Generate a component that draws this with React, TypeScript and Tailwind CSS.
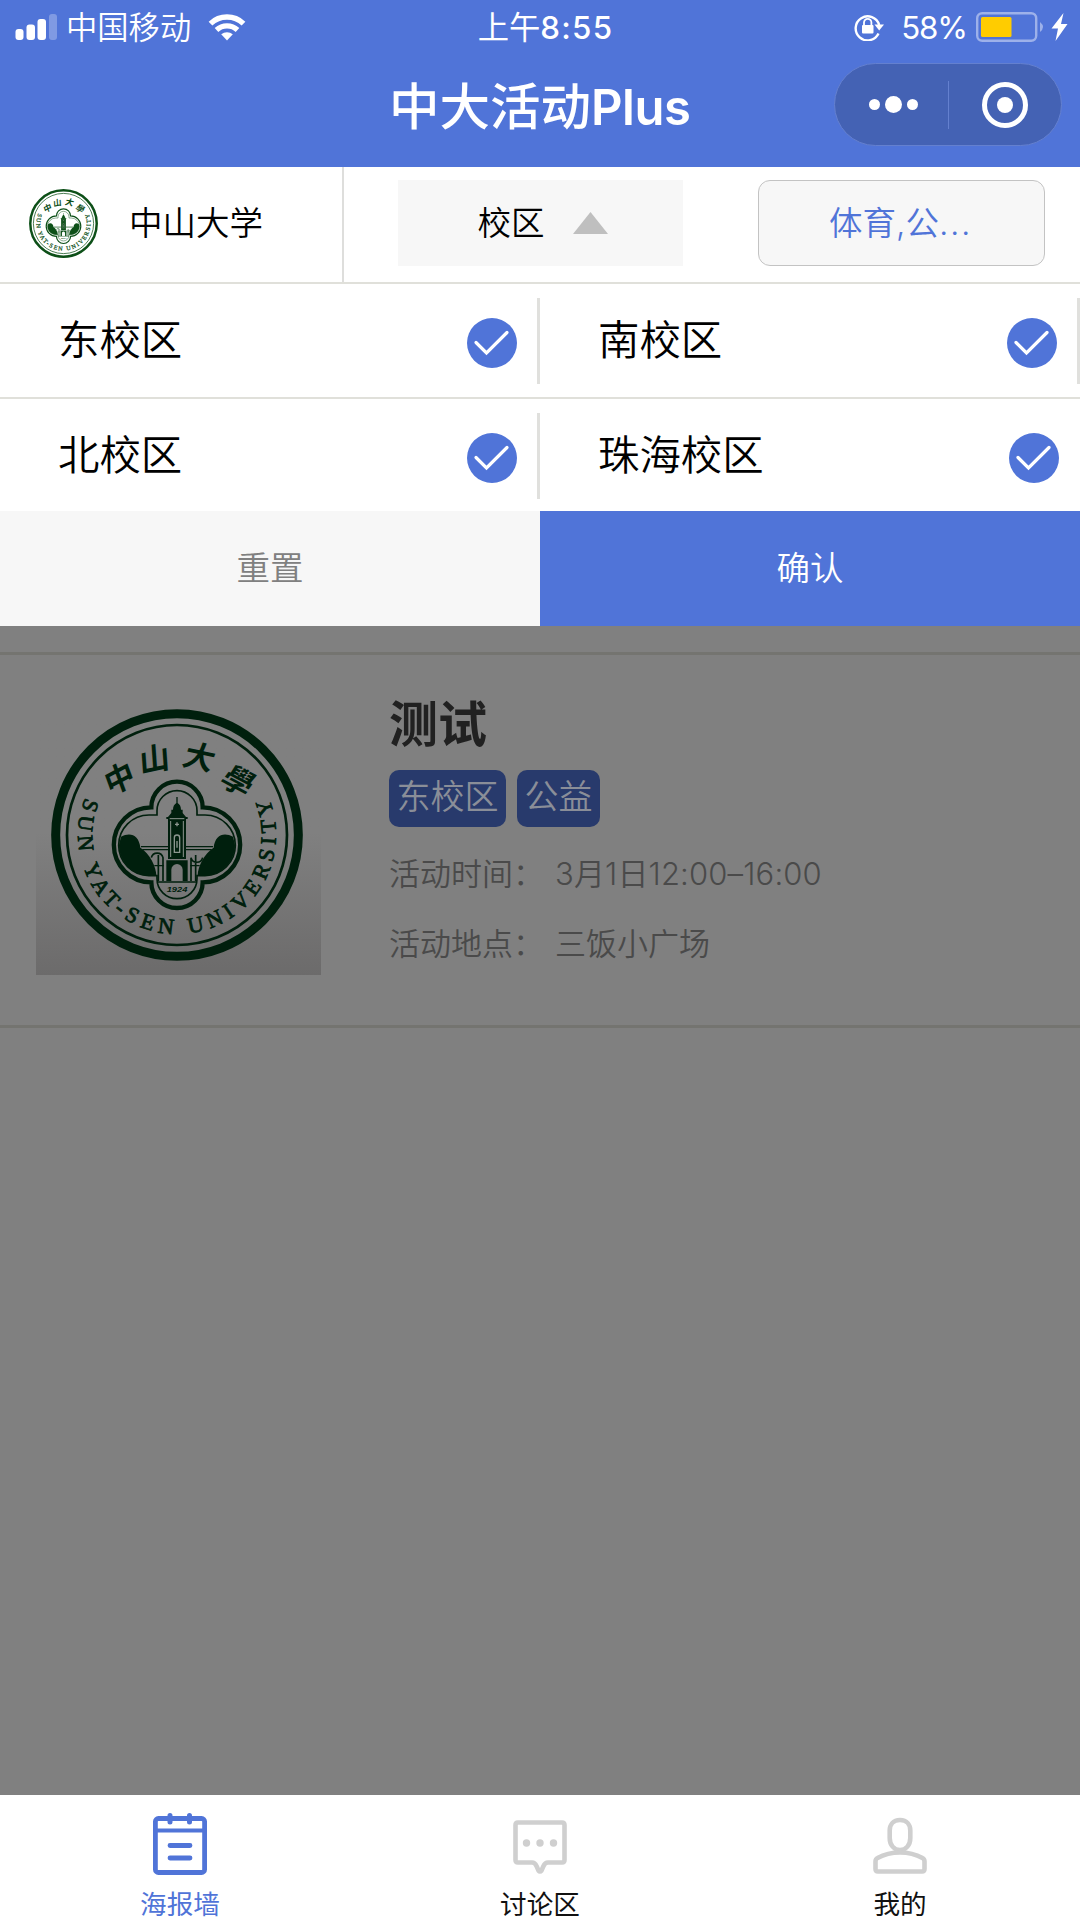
import React from "react";

const quatrefoilOuter =
  "M-77 -83 A77 77 0 0 1 77 -83 A112.500 112.500 0 0 1 77 142 A77 77 0 0 1 -77 142 A112.500 112.500 0 0 1 -77 -83 Z";
const quatrefoilInner =
  "M-60 -60 V-73 A60 60 0 0 1 60 -73 V-60 H84 A91 91 0 0 1 84 122 H60 V131 A60 60 0 0 1 -60 131 V122 H-84 A91 91 0 0 1 -84 -60 Z";

const topCharacters = [
  { char: "中", x: -173, y: -170, angle: -28 },
  { char: "山", x: -68, y: -228, angle: -12 },
  { char: "大", x: 68, y: -234, angle: 12 },
  { char: "學", x: 184, y: -162, angle: 28 },
];

function Emblem({ id, color, paper, className }: { id: string; color: string; paper: string; className: string }) {
  return (
    <svg viewBox="-378 -378 756 756" className={className}>
      <circle r="364" fill={paper} stroke={color} strokeWidth="27" />
      <circle r="330" fill="none" stroke={color} strokeWidth="8" />
      {topCharacters.map((c) => (
        <text
          key={c.char}
          transform={`translate(${c.x} ${c.y}) rotate(${c.angle}) skewX(-8)`}
          textAnchor="middle"
          y="34"
          fontSize="92"
          fontWeight="700"
          fill={color}
          fontFamily="Noto Sans CJK SC, sans-serif"
        >
          {c.char}
        </text>
      ))}
      <path id={id} d="M-275 -112 A297 297 0 1 0 275 -112" fill="none" />
      <text fontSize="66" fill={color} stroke={color} strokeWidth="2.500" fontFamily="Liberation Serif, serif">
        <textPath href={`#${id}`} textLength="1160" lengthAdjust="spacing">
          SUN YAT-SEN UNIVERSITY
        </textPath>
      </text>
      <path d={quatrefoilOuter} fill={paper} stroke={color} strokeWidth="13" />
      <path d={quatrefoilInner} fill="none" stroke={color} strokeWidth="5" />
      <path d="M-168 5 C-140 -10 -114 0 -110 38 C-82 55 -62 95 -62 122 H-84 C-130 122 -174 84 -174 30 Z" fill={color} />
      <path d="M168 5 C140 -10 114 0 110 38 C82 55 62 95 62 122 H84 C130 122 174 84 174 30 Z" fill={color} />
      <path d="M-108 35 H108 M-104 44 H104 M-68 92 H-40 M40 92 H68" stroke={color} strokeWidth="4" />
      <path
        d="M-77 68 A18 18 0 0 1 -42 68 V138 M-56 60 V138 M77 68 A18 18 0 0 1 42 68 V138 M56 60 V138 M-60 141 H60"
        fill="none"
        stroke={color}
        strokeWidth="5"
      />
      <path d="M-2 -114 H2 V-96 C8 -92 12 -86 12 -76 H17 V-66 L27 -54 H32 V-48 H27 V72 H-27 V-48 H-32 V-54 L-27 -54 L-17 -66 V-76 H-12 C-12 -86 -8 -92 -2 -96 Z" fill={color} />
      <path d="M-32 76 H32 V138 H17 V104 A17 17 0 0 0 -17 104 V138 H-32 Z" fill={color} />
      <path d="M-22 -49 H22 M-19 -42 V66 M19 -42 V66" stroke="#8c968f" strokeWidth="3" />
      <path d="M-8 52 V8 A8 8 0 0 1 8 8 V52 Z" fill="none" stroke="#8c968f" strokeWidth="4" />
      <path d="M-6 -32 H6 M0 -38 V-26 M0 18 V38" stroke="#8c968f" strokeWidth="4" />
      <text
        y="172"
        textAnchor="middle"
        fontSize="24"
        fontWeight="700"
        fontStyle="italic"
        fill={color}
        fontFamily="Liberation Sans, sans-serif"
        textLength="62"
        lengthAdjust="spacingAndGlyphs"
      >
        1924
      </text>
    </svg>
  );
}

function StatusBar() {
  return (
    <div className="flex h-[54px] items-center justify-between pl-[15px] pr-[12px] text-[31.300px] leading-[54px]">
      <div className="flex w-[360px] items-center">
        <svg viewBox="0 0 42 26" className="h-[26px] w-[42px]" fill="#fff">
          <rect x="0.5" y="15" width="8" height="11" rx="3" />
          <rect x="11.5" y="10.500" width="8.500" height="15.500" rx="3" />
          <rect x="22.500" y="5" width="8.500" height="21" rx="3" />
          <rect x="34" y="0" width="8" height="26" rx="3" opacity="0.28" />
        </svg>
        <span className="ml-[9px] h-[54px] pt-[1px] font-[350]">中国移动</span>
        <svg viewBox="0 0 38 27" className="ml-[17px] h-[27px] w-[38px]">
          <g fill="none" stroke="#fff" strokeWidth="5.400">
            <path d="M2.500 9.600 A24 24 0 0 1 35.500 9.600" />
            <path d="M8.500 16 A15.500 15.500 0 0 1 29.500 16" />
          </g>
          <path d="M13.200 20.200 A9.500 9.500 0 0 1 24.800 20.200 L19 26.500 Z" fill="#fff" />
        </svg>
      </div>
      <div className="h-[54px] pt-[1px] pl-[8px] text-center font-medium tracking-[1.300px]">
        <span className="font-normal tracking-normal">上午</span>8:55
      </div>
      <div className="flex w-[360px] items-center justify-end">
        <svg viewBox="0 0 30 28" className="h-[28px] w-[30px]">
          <path d="M24.500 20.500 A12 12 0 1 1 25.200 12" fill="none" stroke="#fff" strokeWidth="2.400" />
          <path d="M20.500 11.500 H30 L25.200 17.500 Z" fill="#fff" />
          <rect x="8" y="12" width="11.500" height="8.500" rx="1" fill="#fff" />
          <path d="M10 12.500 V9.500 A3.700 3.700 0 0 1 17.400 9.500 V12.500" fill="none" stroke="#fff" strokeWidth="1.800" />
        </svg>
        <span className="ml-[17px] h-[54px] pt-[1px] tracking-[-1.100px]">58%</span>
        <svg viewBox="0 0 68 30" className="ml-[9px] h-[30px] w-[68px]">
          <rect x="1.200" y="1.200" width="59" height="27.600" rx="5" fill="none" stroke="#9db1ea" strokeWidth="2.400" />
          <rect x="5" y="5" width="30.500" height="20" rx="1.500" fill="#ffcc00" />
          <path d="M64 10 Q70 15 64 20 Z" fill="#9db1ea" />
        </svg>
        <svg viewBox="0 0 17 28" className="ml-[7px] h-[28px] w-[17px]">
          <path d="M12.500 0 L0.500 15.500 H7 L4.500 28 L16.500 11 H10 Z" fill="#fff" />
        </svg>
      </div>
    </div>
  );
}

function TitleBar() {
  return (
    <div className="flex h-[113px] items-start pr-[18px]">
      <div className="w-[389px]" />
      <h1 className="h-[100px] w-[445px] whitespace-nowrap text-[50.500px] leading-[106px] font-medium">
        中大活动<span className="text-[49px] font-semibold tracking-[-0.500px]">Plus</span>
      </h1>
      <div className="mt-[9px] flex h-[83px] w-[228px] items-center rounded-full border border-[#6480cf] bg-[#4462b4]">
        <div className="flex w-[113px] items-center gap-[5px] pl-[34px]">
          <span className="size-[11px] rounded-full bg-white" />
          <span className="size-[17px] rounded-full bg-white" />
          <span className="size-[11px] rounded-full bg-white" />
        </div>
        <div className="h-[48px] w-px bg-[#6480cf]" />
        <div className="flex flex-1 items-center justify-center">
          <div className="flex size-[46px] items-center justify-center rounded-full border-[5.5px] border-white">
            <span className="size-[16px] rounded-full bg-white" />
          </div>
        </div>
      </div>
    </div>
  );
}

function FilterBar() {
  return (
    <div className="flex h-[117px] border-b-[2px] border-[#e0e0da] bg-white text-[33.5px] font-[350]">
      <div className="flex h-[115px] w-[344px] items-center border-r-2 border-[#dededc] pb-[2px] pl-[29px]">
        <Emblem id="small-seal-text" color="#0d5018" paper="#ffffff" className="size-[69px]" />
        <span className="ml-[31px] text-black">中山大学</span>
      </div>
      <div className="mt-[13px] ml-[54px] flex h-[86px] w-[285px] items-center justify-center bg-[#f7f7f7] pl-[4px]">
        <span className="pt-[1px]">校区</span>
        <svg viewBox="0 0 35 22" className="ml-[28px] h-[22px] w-[35px]">
          <path d="M17.500 0 L35 22 H0 Z" fill="#bfbfbf" />
        </svg>
      </div>
      <div className="mt-[13px] ml-[75px] flex h-[86px] w-[287px] items-center justify-center rounded-[12px] border border-[#c3c3c3] bg-[#f7f7f7] pt-[1px] pr-[2px] text-[#5074d8]">
        体育,公<span className="tracking-[1.6px]">...</span>
      </div>
    </div>
  );
}

function CheckBadge() {
  return (
    <svg viewBox="0 0 50 50" className="mt-[4px] size-[50px]">
      <circle cx="25" cy="25" r="25" fill="#5074d8" />
      <path d="M9 24.500 L19.500 35 L40 14.500" fill="none" stroke="#fff" strokeWidth="3.200" strokeLinecap="round" />
    </svg>
  );
}

function CampusCell({ name, divider }: { name: string; divider: boolean }) {
  return (
    <div className="flex h-[113px] w-[540px] items-center justify-between pl-[58px]">
      <span className="text-[41.400px] font-[350]">{name}</span>
      <div className={divider ? "flex items-center gap-[20px]" : "flex items-center pr-[21px]"}>
        <CheckBadge />
        {divider && <div className="h-[86px] w-[3px] bg-[#e0e0dd]" />}
      </div>
    </div>
  );
}

function CampusPanel() {
  return (
    <div className="bg-white">
      <div className="flex h-[115px] border-b-[2px] border-[#e0e0da]">
        <CampusCell name="东校区" divider />
        <CampusCell name="南校区" divider />
      </div>
      <div className="flex h-[112px]">
        <CampusCell name="北校区" divider />
        <CampusCell name="珠海校区" divider={false} />
      </div>
      <div className="flex h-[115px] text-[33.500px] leading-[113px]">
        <button className="w-[540px] bg-[#f7f7f7] font-[350] text-[#808080]">重置</button>
        <button className="w-[540px] bg-[#5074d8] font-[350] text-white">确认</button>
      </div>
    </div>
  );
}

function EventCard() {
  return (
    <div className="mt-[26px] flex h-[376px] border-y-[3px] border-[#747470] bg-[#808080]">
      <div className="mt-[35px] ml-[36px] flex h-[285px] w-[285px] justify-center bg-linear-to-b from-[#808080] from-50% to-[#6c6b6b] pt-[19px] pr-[3px]">
        <Emblem id="large-seal-text" color="#001f0d" paper="transparent" className="size-[252px]" />
      </div>
      <div className="ml-[68px]">
        <h2 className="mt-[38px] h-[64px] text-[49px] leading-[64px] font-bold text-[#212121]">测试</h2>
        <div className="mt-[13px] flex gap-[11px] text-[34px] leading-[54px] text-[#8a8e98]">
          <span className="h-[57px] w-[117px] rounded-[10px] bg-[#283a6c] text-center font-[350]">东校区</span>
          <span className="h-[57px] w-[83px] rounded-[10px] bg-[#283a6c] text-center font-[350]">公益</span>
        </div>
        <div className="mt-[22px] flex h-[50px] text-[31px] leading-[50px] font-[350] text-[#4a4a4a]">
          <span className="w-[166px]">活动时间：</span>
          <span className="tracking-[0.150px]">3月1日12:00–16:00</span>
        </div>
        <div className="mt-[20px] flex h-[50px] text-[31px] leading-[50px] font-[350] text-[#4a4a4a]">
          <span className="w-[166px]">活动地点：</span>
          <span>三饭小广场</span>
        </div>
      </div>
    </div>
  );
}

function TabBar() {
  return (
    <nav className="flex h-[125px] bg-white pt-[17px] text-[26.600px] font-normal text-[#111111]">
      <div className="flex w-[360px] flex-col items-center text-[#5074d8]">
        <svg viewBox="0 0 54 64" className="h-[64px] w-[54px]" fill="none" stroke="#5074d8" strokeWidth="4.800" strokeLinecap="round">
          <rect x="2.400" y="6.500" width="49.200" height="54" rx="3" />
          <path d="M2.300 18.500 H51.700" strokeWidth="4" />
          <path d="M17 3.500 V10 M36.500 3.500 V10" strokeWidth="5" />
          <path d="M17 33.500 H37 M17 46 H37" />
        </svg>
        <span className="mt-[12px] leading-[32px]">海报墙</span>
      </div>
      <div className="flex w-[360px] flex-col items-center">
        <svg viewBox="0 0 54 64" className="h-[64px] w-[54px]" fill="none" stroke="#cfcfcf" strokeWidth="4.600" strokeLinejoin="round">
          <path d="M5 10.500 H49 Q51.500 10.500 51.500 13 V48 Q51.500 50.500 49 50.500 H35 Q32 50.500 30.500 54 L28.500 58.500 Q27 60.500 25.500 58.500 L23.500 54 Q22 50.500 19 50.500 H5 Q2.500 50.500 2.500 48 V13 Q2.500 10.500 5 10.500 Z" />
          <g fill="#cfcfcf" stroke="none">
            <circle cx="13.500" cy="31" r="3.700" />
            <circle cx="27" cy="31" r="3.700" />
            <circle cx="40.500" cy="31" r="3.700" />
          </g>
        </svg>
        <span className="mt-[12px] leading-[32px]">讨论区</span>
      </div>
      <div className="flex w-[360px] flex-col items-center">
        <svg viewBox="0 0 54 64" className="h-[64px] w-[54px]" fill="none" stroke="#cfcfcf" strokeWidth="4.600" strokeLinejoin="round">
          <path d="M27 8 C34 8 37.300 13 37.300 18.500 V26 C37.300 33 33 38 27 38 C21 38 16.700 33 16.700 26 V18.500 C16.700 13 20 8 27 8 Z" />
          <path d="M27 40.500 C36 40.500 44 43 49.500 46 Q51.500 47 51.500 49.500 V57 Q51.500 59.500 49 59.500 H5 Q2.500 59.500 2.500 57 V49.500 Q2.500 47 4.500 46 C10 43 18 40.500 27 40.500 Z" />
        </svg>
        <span className="mt-[12px] leading-[32px]">我的</span>
      </div>
    </nav>
  );
}

export default function App() {
  return (
    <div className="flex h-[1920px] w-[1080px] flex-col overflow-hidden bg-[#808080] font-[Inter,'Noto_Sans_CJK_SC',sans-serif] text-black">
      <header className="h-[167px] bg-[#5074d8] text-white">
        <StatusBar />
        <TitleBar />
      </header>
      <FilterBar />
      <CampusPanel />
      <main className="flex-1">
        <EventCard />
      </main>
      <TabBar />
    </div>
  );
}
